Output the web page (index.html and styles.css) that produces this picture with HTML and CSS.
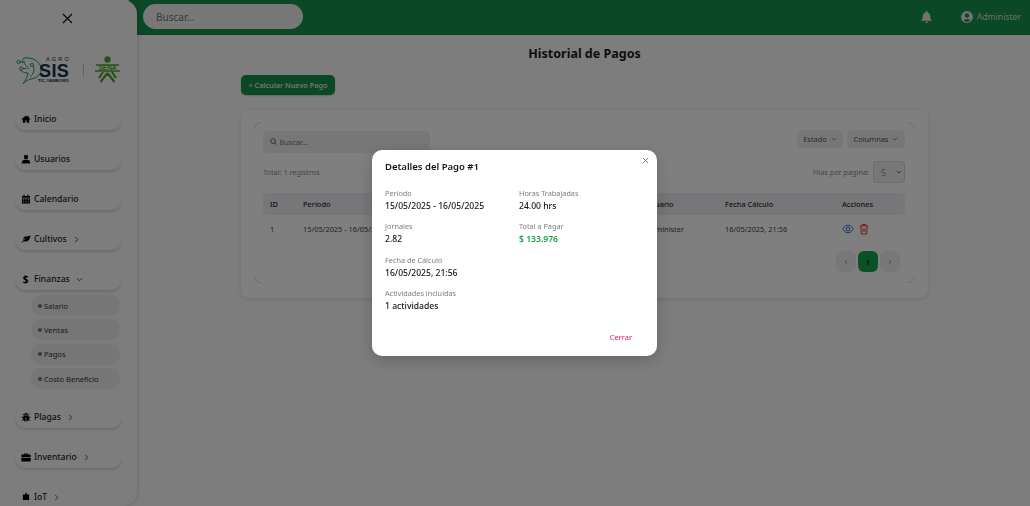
FILE: index.html
```html
<!DOCTYPE html>
<html lang="es">
<head>
<meta charset="utf-8">
<title>Historial de Pagos</title>
<link rel="stylesheet" href="styles.css">
</head>
<body>
<div class="app">
  <aside class="sidebar">
    <button class="side-close" aria-label="Cerrar menú"><svg width="11" height="11" viewBox="0 0 11 11"><path d="M1 1l9 9M10 1l-9 9" stroke="#111" stroke-width="1.2" fill="none"/></svg></button>
    <div class="logos">
      <div class="agro">
        <svg class="leaf-logo" width="26" height="28" viewBox="0 0 26 28" fill="none" stroke="#1f9a6b" stroke-width="1">
          <path d="M8 1c8-1 16 3 17 10 1 6-4 10-10 11-4 1-6 3-8 5 2-4 5-7 5-11"/>
          <path d="M8 1c-2 2-2 3-1 5M12 16c-3 0-6-1-8-3M13 12l-5-6M17 9c2 3 1 8-3 11"/>
          <circle cx="2.500" cy="5" r="1.600"/><circle cx="5" cy="11.500" r="1.600"/><circle cx="16" cy="8" r="1.600"/>
          <path d="M4 5h5M6.500 11.500h4"/>
        </svg>
        <div class="agro-text">
          <span class="agro-top">AGRO</span>
          <span class="agro-sis">SIS</span>
          <span class="agro-sub">TIC-YAMBORO</span>
        </div>
      </div>
      <span class="logo-sep"></span>
      <svg class="sena" width="27" height="27" viewBox="0 0 27 27" fill="none" stroke="#4fa326">
        <circle cx="13.500" cy="3.500" r="3.200" fill="#4fa326" stroke="none"/>
        <path d="M2 9h23M1 15h25" stroke-width="1.600"/>
        <path d="M13.500 17l-7 9M13.500 17l7 9M9 16l-4 6M18 16l4 6M13.500 17v3" stroke-width="2.200"/>
        <text x="13.500" y="14.300" text-anchor="middle" class="sena-text">SENA</text>
      </svg>
    </div>
    <nav class="nav">
      <a class="nav-item"><svg class="ico" viewBox="0 0 16 16"><path d="M8 2.500L.7 8.300l.9 1L3 8.200V14h3.800v-3.500h2.400V14H13V8.200l1.400 1.100.9-1L12.500 6V3h-2v1.400z"/></svg>Inicio</a>
      <a class="nav-item"><svg class="ico" viewBox="0 0 16 16"><circle cx="8" cy="4.800" r="3.500"/><path d="M1.500 15v-2c0-2.500 2-4 4-4h5c2 0 4 1.500 4 4v2z"/></svg>Usuarios</a>
      <a class="nav-item"><svg class="ico" viewBox="0 0 16 16"><path d="M4 1h2v2h4V1h2v2h2.500v3h-13V3H4zM1.500 7h13v8h-13zM3.500 8.500v1.500H5V8.500zM7.200 8.500v1.500h1.600V8.500zM11 8.500v1.500h1.500V8.500zM3.500 11.500V13H5v-1.500zM7.200 11.500V13h1.600v-1.500zM11 11.500V13h1.500v-1.500z" fill-rule="evenodd"/></svg>Calendario</a>
      <a class="nav-item"><svg class="ico" viewBox="0 0 16 16"><path d="M15.500 2c-1 5-2.500 9.500-7.500 10-1.500.1-2.700-.2-3.500-.8L2 14l-1-1 3.500-3.500C6.500 8 8.500 7 10 6.500 8 6.800 5.500 7.500 3.300 9.500 3.200 6 6 3.800 9.500 3.700 12 3.600 14 3.500 15.500 2z"/></svg>Cultivos<svg class="chev" viewBox="0 0 8 8"><path d="M2.500 1l3 3-3 3"/></svg></a>
      <a class="nav-item"><span class="ico dollar">$</span>Finanzas<svg class="chev" viewBox="0 0 8 8"><path d="M1 2.500l3 3 3-3"/></svg></a>
      <div class="submenu">
        <a class="sub-item"><i class="dot"></i>Salario</a>
        <a class="sub-item"><i class="dot"></i>Ventas</a>
        <a class="sub-item"><i class="dot"></i>Pagos</a>
        <a class="sub-item"><i class="dot"></i>Costo Beneficio</a>
      </div>
      <a class="nav-item"><svg class="ico" viewBox="0 0 16 16"><path d="M5 4.500C5 2.500 6.500 1.500 8 1.500s3 1 3 3zM4.500 5.500h7c1 1 1.500 2.500 1.500 4.500 0 3-2 5-4.400 5V8h-1.200v7C5 15 3 13 3 10c0-2 .5-3.500 1.500-4.500z"/><path d="M3 3l2.500 3M13 3l-2.500 3M.5 8.500h3M15.500 8.500h-3M1 14l3-2.500M15 14l-3-2.500" stroke="#000" stroke-width="1.300" fill="none"/></svg>Plagas<svg class="chev" viewBox="0 0 8 8"><path d="M2.500 1l3 3-3 3"/></svg></a>
      <a class="nav-item"><svg class="ico" viewBox="0 0 16 16"><path d="M5 4V2.500h6V4h3.500c.5 0 1 .5 1 1v3.500H.5V5c0-.5.5-1 1-1zM6.300 4h3.400v-.5H6.300zM.5 9.500h15V14c0 .5-.5 1-1 1h-13c-.5 0-1-.5-1-1z" fill-rule="evenodd"/></svg>Inventario<svg class="chev" viewBox="0 0 8 8"><path d="M2.500 1l3 3-3 3"/></svg></a>
      <a class="nav-item"><svg class="ico" viewBox="0 0 16 16"><path d="M3 4h10v9H3zM7 1h2v3H7z"/></svg>IoT<svg class="chev" viewBox="0 0 8 8"><path d="M2.500 1l3 3-3 3"/></svg></a>
    </nav>
  </aside>

  <div class="main">
    <header class="topbar">
      <div class="top-search">Buscar...</div>
      <div class="top-right">
        <svg class="bell" width="11" height="12" viewBox="0 0 14 16"><path d="M7 0a1.300 1.300 0 0 1 1.300 1.300v.6C10.600 2.400 12 4.300 12 6.500c0 3.500 1 4.600 2 5.800V13H0v-.7c1-1.200 2-2.300 2-5.800 0-2.200 1.400-4.100 3.700-4.600v-.6A1.300 1.300 0 0 1 7 0zM5 14h4a2 2 0 0 1-4 0z"/></svg>
        <span class="user"><svg width="12" height="12" viewBox="0 0 16 16"><path fill-rule="evenodd" d="M8 0a8 8 0 1 1 0 16A8 8 0 0 1 8 0zm0 3a3 3 0 1 0 0 6 3 3 0 0 0 0-6zm0 7.500c-2 0-3.700 1-4.400 2.300A6.300 6.300 0 0 0 8 14.500c1.700 0 3.300-.6 4.400-1.700-.7-1.300-2.400-2.300-4.400-2.300z"/></svg>Administer</span>
      </div>
    </header>
    <section class="content">
      <h1 class="page-title">Historial de Pagos</h1>
      <button class="primary-btn">+ Calcular Nuevo Pago</button>
      <div class="card">
        <div class="card-inner">
          <i class="corner tl"></i><i class="corner tr"></i><i class="corner bl"></i><i class="corner br"></i>
          <div class="filters">
            <div class="table-search"><svg width="7" height="7" viewBox="0 0 8 8" fill="none" stroke="#52525b"><circle cx="3.500" cy="3.500" r="2.700"/><path d="M5.500 5.500L7.500 7.500"/></svg>Buscar...</div>
            <div class="filter-btns">
              <span class="filter-btn est">Estado<svg class="mini" viewBox="0 0 8 8"><path d="M1 2.500l3 3 3-3"/></svg></span>
              <span class="filter-btn col">Columnas<svg class="mini" viewBox="0 0 8 8"><path d="M1 2.500l3 3 3-3"/></svg></span>
            </div>
          </div>
          <div class="meta">
            <span>Total: 1 registros</span>
            <span class="per-page">Filas por página:<span class="select">5<svg class="mini dark" viewBox="0 0 8 8"><path d="M1 2.500l3 3 3-3"/></svg></span></span>
          </div>
          <table class="table">
            <thead>
              <tr><th class="c-id">ID</th><th class="c-per">Período</th><th class="c-jor">Jornales</th><th class="c-tot">Total</th><th class="c-usr">Usuario</th><th class="c-fec">Fecha Cálculo</th><th class="c-acc">Acciones</th></tr>
            </thead>
            <tbody>
              <tr>
                <td>1</td><td>15/05/2025 - 16/05/2025</td><td>2.82</td><td>$ 133.976</td><td>Administer</td><td>16/05/2025, 21:56</td>
                <td class="actions">
                  <svg width="12" height="12" viewBox="0 0 24 24" fill="none" stroke="#2f6fd8" stroke-width="2"><path d="M1.500 12S5.500 4.500 12 4.500 22.500 12 22.500 12 18.500 19.500 12 19.500 1.500 12 1.500 12z"/><circle cx="12" cy="12" r="3.500"/></svg>
                  <svg width="12" height="12" viewBox="0 0 24 24" fill="none" stroke="#e2363f" stroke-width="2"><path d="M3 6h18M8.500 6V3h7v3M5.500 6l1 16h11l1-16M10 10v8M14 10v8"/></svg>
                </td>
              </tr>
            </tbody>
          </table>
          <div class="pager">
            <span class="page-btn"><svg class="mini" viewBox="0 0 8 8"><path d="M5.500 1l-3 3 3 3"/></svg></span>
            <span class="page-btn on">1</span>
            <span class="page-btn"><svg class="mini" viewBox="0 0 8 8"><path d="M2.500 1l3 3-3 3"/></svg></span>
          </div>
        </div>
      </div>
    </section>
  </div>
</div>

<div class="overlay">
  <div class="modal">
    <button class="modal-x" aria-label="Cerrar"><svg width="7" height="7" viewBox="0 0 8 8"><path d="M1 1l6 6M7 1l-6 6" stroke="#71717a" stroke-width="1" fill="none"/></svg></button>
    <h2 class="modal-title">Detalles del Pago #1</h2>
    <div class="detail-grid">
      <div class="detail"><span class="lab">Período</span><span class="val">15/05/2025 - 16/05/2025</span></div>
      <div class="detail"><span class="lab">Horas Trabajadas</span><span class="val">24.00 hrs</span></div>
      <div class="detail"><span class="lab">Jornales</span><span class="val">2.82</span></div>
      <div class="detail"><span class="lab">Total a Pagar</span><span class="val green">$ 133.976</span></div>
      <div class="detail"><span class="lab">Fecha de Cálculo</span><span class="val">16/05/2025, 21:56</span></div>
      <div class="detail"></div>
      <div class="detail"><span class="lab">Actividades incluidas</span><span class="val">1 actividades</span></div>
    </div>
    <div class="modal-foot"><span class="close-link">Cerrar</span></div>
  </div>
</div>
</body>
</html>
```
FILE: styles.css
```css
* { box-sizing: border-box; }
html, body { margin: 0; height: 100%; overflow: hidden; }
body { font-family: "Noto Sans", "Open Sans", sans-serif; background: #fbfbfb; color: #11181c; }
a { color: inherit; text-decoration: none; }
button { border: 0; background: none; padding: 0; font: inherit; }

.app { display: flex; height: 506px; }

/* Sidebar */
.sidebar { width: 137px; flex: none; height: 100%; background: #fbfbfb; border-radius: 0 14px 14px 0; position: relative; z-index: 1; box-shadow: 1px 0 4px rgba(0,0,0,.14); padding: 13px 15px 0; overflow: hidden; display: flex; flex-direction: column; }
.side-close { align-self: center; height: 11px; display: flex; margin-left: -3px; }
.logos { display: flex; align-items: center; margin-top: 32px; height: 29px; margin-left: 1px; }
.agro { display: flex; align-items: center; }
.leaf-logo { flex: none; }
.agro-text { display: flex; flex-direction: column; align-items: flex-end; width: 27px; color: #12324a; line-height: 1; font-family: "Liberation Sans", sans-serif; }
.agro-top { font-size: 5.500px; letter-spacing: 2.200px; margin-right: -2px; height: 7px; }
.agro-sis { font-size: 18px; font-weight: 700; height: 14px; line-height: 14px; letter-spacing: .3px; }
.agro-sub { font-size: 4.400px; font-weight: 700; margin-top: 1px; white-space: nowrap; }
.logo-sep { width: 1px; height: 13px; background: #c4c4c4; margin: 0 11px 0 14px; flex: none; }
.sena { flex: none; margin-top: -2px; margin-left: -1px; }
.sena-text { font-size: 6.500px; font-weight: 800; fill: #4fa326; stroke: none; font-family: "Liberation Sans", sans-serif; }

.nav { margin-top: 23px; display: flex; flex-direction: column; gap: 18px; height: 392px; overflow: hidden; flex: none; }
.nav-item { display: flex; align-items: center; flex: none; height: 22px; border-radius: 12px; background: #fbfbfb; box-shadow: 0 2px 3px rgba(0,0,0,.14); padding-left: 5.500px; font-size: 8.600px; font-weight: 500; color: #222; }
.ico { width: 10px; height: 10px; margin-right: 3.500px; flex: none; fill: #000; }
.dollar { font-size: 10px; font-weight: 700; line-height: 10px; text-align: center; color: #000; }
.chev { width: 7px; height: 7px; margin-left: 6px; fill: none; stroke: #333; stroke-width: 1; }
.submenu { display: flex; flex-direction: column; gap: 3.400px; margin: -13px 0 -1px 16px; width: 89px; flex: none; }
.sub-item { height: 21px; border-radius: 11px; background: #ececef; display: flex; align-items: center; padding-left: 6.500px; font-size: 7.500px; font-weight: 400; color: #333; }
.dot { width: 4px; height: 4px; border-radius: 50%; background: #71717a; margin-right: 2.500px; }

/* Main */
.main { flex: 1; min-width: 0; margin-left: -8px; display: flex; flex-direction: column; }
.topbar { height: 35px; flex: none; background: #17904a; border-bottom: 1px solid #147d40; display: flex; align-items: center; padding: 0 9px 1px 14px; justify-content: space-between; }
.top-search { width: 160px; height: 25px; border-radius: 13px; background: #f0f0f0; color: #71717a; font-size: 10px; display: flex; align-items: center; padding-left: 13px; }
.top-right { display: flex; align-items: center; gap: 29px; font-size: 8.600px; color: #ddd; }
.bell { fill: #e5e5e5; }
.user { display: flex; align-items: center; gap: 4px; }
.user svg { fill: #e5e5e5; }

.content { padding: 11px 102px 0 112px; display: flex; flex-direction: column; align-items: flex-start; }
.page-title { align-self: center; margin: 0; font-size: 12.500px; font-weight: 700; line-height: 15px; color: #1c1c1c; }
.primary-btn { margin-top: 14px; height: 20px; width: 94px; border-radius: 5px; background: #17904a; color: #e8f5ec; font-size: 7.400px; font-weight: 500; box-shadow: 0 1px 2px rgba(0,0,0,.2); }
.card { margin-top: 15px; width: 687px; height: 188px; background: #fff; border-radius: 8px; box-shadow: 0 1px 4px rgba(0,0,0,.13); padding: 12px 13px; }
.card-inner { height: 161px; position: relative; padding: 9px 10px 0 9px; }
.corner { position: absolute; width: 8px; height: 7px; border: 0 solid #e2e2e2; }
.tl { left: 0; top: 0; border-width: 1px 0 0 1px; border-radius: 8px 0 0 0; }
.tr { right: 0; top: 0; border-width: 1px 1px 0 0; border-radius: 0 8px 0 0; }
.bl { left: 0; bottom: 0; border-width: 0 0 1px 1px; border-radius: 0 0 0 8px; }
.br { right: 0; bottom: 0; border-width: 0 1px 1px 0; border-radius: 0 0 8px 0; }

.filters { display: flex; justify-content: space-between; align-items: flex-start; }
.table-search { width: 167px; height: 22px; border-radius: 5px; background: #efeff1; display: flex; align-items: center; gap: 2.500px; padding-left: 7px; padding-bottom: 1px; font-size: 7.300px; color: #71717a; }
.filter-btns { display: flex; gap: 4px; margin-top: -1px; }
.filter-btn { height: 18px; border-radius: 5px; background: #efeff1; display: flex; align-items: center; justify-content: center; gap: 4px; font-size: 7.400px; color: #52525b; }
.est { width: 46px; } .col { width: 58px; }
.mini { width: 6px; height: 6px; fill: none; stroke: #71717a; stroke-width: 1; flex: none; }
.mini.dark { stroke: #333; }

.meta { display: flex; justify-content: space-between; align-items: center; margin-top: 8px; height: 22px; font-size: 7.300px; color: #8a8a92; }
.per-page { display: flex; align-items: center; gap: 4px; }
.select { width: 32px; height: 22px; border-radius: 4px; background: #f0f0f2; border: 1px solid #d8d8dc; display: flex; align-items: center; justify-content: space-between; padding: 0 2px 0 7px; font-size: 9px; color: #8a8a92; }

.table { width: 642px; margin-top: 10px; border-collapse: separate; border-spacing: 0; table-layout: fixed; font-size: 7.400px; }
.table th { height: 22px; background: #efeff2; text-align: left; font-weight: 500; padding: 0 0 0 7px; color: #27272a; }
.table th:first-child { border-radius: 5px 0 0 5px; }
.table th:last-child { border-radius: 0 5px 5px 0; }
.table td { height: 27px; padding: 0 0 0 7px; color: #3f3f46; white-space: nowrap; overflow: hidden; }
.c-id { width: 33px; } .c-per { width: 120px; } .c-jor { width: 110px; } .c-tot { width: 113px; } .c-usr { width: 79px; } .c-fec { width: 117px; } .c-acc { width: 70px; }
.table td.actions { display: flex; align-items: center; gap: 4px; height: 27px; }

.pager { display: flex; justify-content: flex-end; gap: 2px; margin: 9px 5px 0 0; }
.page-btn { width: 20px; height: 21px; border-radius: 6px; background: #f0f0f2; display: flex; align-items: center; justify-content: center; font-size: 7.500px; color: #222; }
.page-btn.on { background: #17a34a; color: #000; font-weight: 500; }

/* Modal */
.overlay { position: fixed; inset: 0; background: rgba(0,0,0,.5); backdrop-filter: blur(.6px); display: flex; align-items: center; justify-content: center; z-index: 10; }
.modal { width: 285px; height: 206px; margin-left: -1px; background: #fff; border-radius: 10px; position: relative; padding: 10px 13px 0; display: flex; flex-direction: column; box-shadow: 0 4px 16px rgba(0,0,0,.2); }
.modal-x { position: absolute; right: 8px; top: 7px; width: 7px; height: 7px; display: flex; }
.modal-title { margin: 0; font-size: 9.500px; line-height: 13px; font-weight: 600; color: #11181c; }
.detail-grid { display: grid; grid-template-columns: 134px 1fr; grid-auto-rows: 33.400px; margin-top: 15px; }
.detail { display: flex; flex-direction: column; gap: 2px; }
.lab { font-size: 7.300px; line-height: 10px; color: #7c7c85; }
.val { font-size: 8.600px; line-height: 12px; font-weight: 500; color: #11181c; }
.green { color: #17a34a; font-weight: 600; }
.modal-foot { margin-top: auto; height: 24px; display: flex; justify-content: flex-end; padding-right: 12px; }
.close-link { font-size: 7.500px; line-height: 10px; color: #f31260; }
```
